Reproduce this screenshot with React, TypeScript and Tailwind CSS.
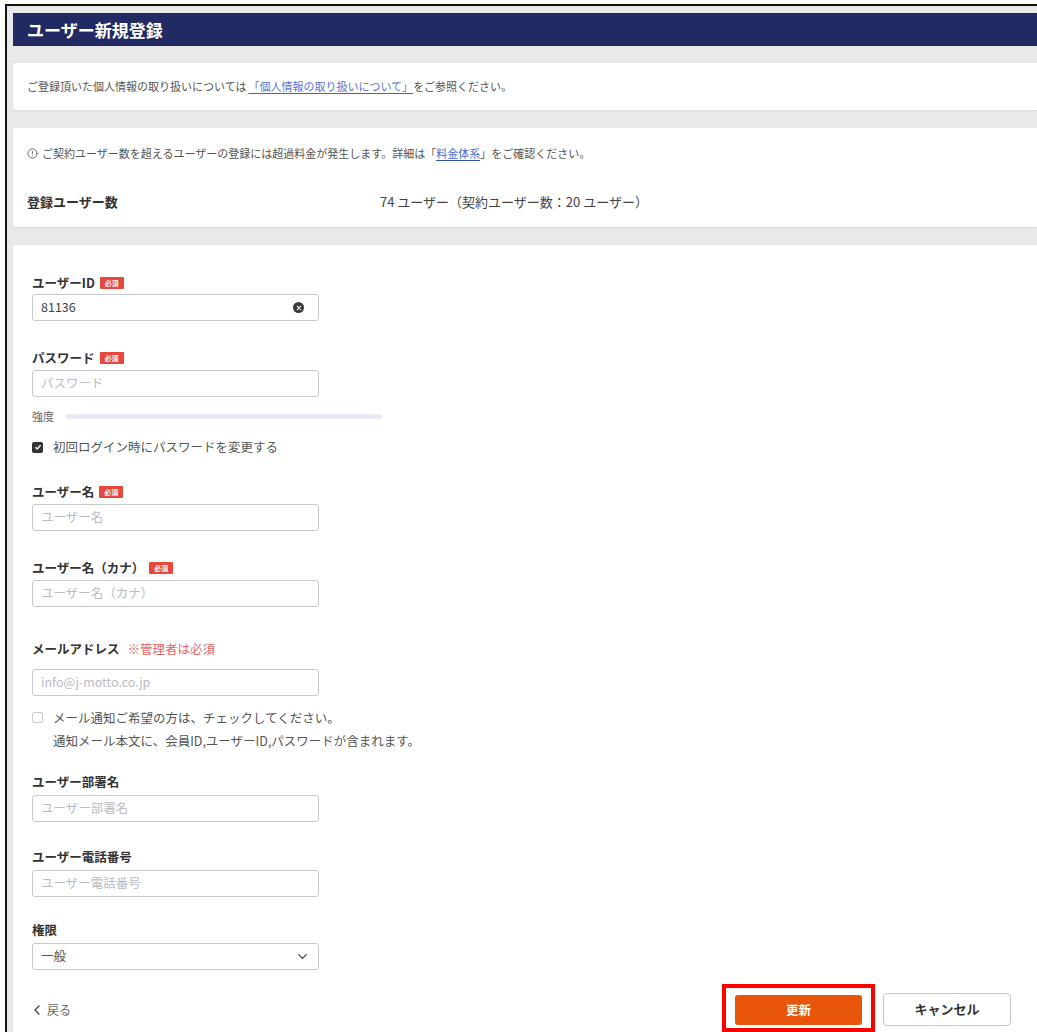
import { ChevronDown, ChevronLeft, CircleAlert } from 'lucide-react';

// 必須バッジ
function Required() {
  return (
    <span className="ml-[5px] inline-flex h-[12px] w-[24px] items-center justify-center rounded-[1px] bg-[#e8473b] text-[7px] leading-none text-white">
      必須
    </span>
  );
}

// 項目ラベル
function Label({ text, required, className = '' }: { text: string; required?: boolean; className?: string }) {
  return (
    <div className={`flex h-[18px] items-center text-[12.5px] font-bold text-[#333] ${className}`}>
      {text}
      {required && <Required />}
    </div>
  );
}

// テキスト入力
function TextInput({ placeholder, value, className = 'mt-[3px]', clearable }: { placeholder?: string; value?: string; className?: string; clearable?: boolean }) {
  return (
    <div className={`flex h-[27px] w-[287px] items-center rounded-[3px] border border-[#c9c9c9] bg-white pl-[8px] pr-[14px] text-[12.5px] ${className}`}>
      <span className={`flex-1 ${value ? 'text-[#444]' : 'text-[#b9bcc4]'}`}>{value ?? placeholder}</span>
      {clearable && (
        <span className="flex h-[11px] w-[11px] items-center justify-center rounded-full bg-[#3a3a3a]">
          <svg viewBox="0 0 10 10" className="h-[6px] w-[6px]" stroke="#fff" strokeWidth="1.8" strokeLinecap="round">
            <path d="M2 2l6 6M8 2l-6 6" />
          </svg>
        </span>
      )}
    </div>
  );
}

export default function App() {
  return (
    <div className="h-[1032px] w-[1037px] overflow-hidden bg-white pl-[5px] pt-[4px] font-['Noto_Sans_CJK_JP','Noto_Sans',sans-serif]">
      <div className="flex h-full flex-col border-l-2 border-t-2 border-[#111] bg-[#e9e9e9] pl-[6px] pt-[7px]">
        {/* タイトルバー */}
        <div className="flex h-[33px] shrink-0 items-center bg-[#212a62] pl-[14px] text-[17px] font-bold text-white">
          ユーザー新規登録
        </div>

        {/* 個人情報の案内 */}
        <div className="mt-[17px] flex h-[47px] shrink-0 items-center rounded-l-[3px] bg-white pl-[14px] text-[11px] text-[#555] shadow-[0_1px_2px_rgba(0,0,0,0.08)]">
          ご登録頂いた個人情報の取り扱いについては
          <span className="ml-[2px] text-[#5b73e0] underline decoration-[#3d6f8f] underline-offset-2">「個人情報の取り扱いについて」</span>
          をご参照ください。
        </div>

        {/* 契約ユーザー数 */}
        <div className="mt-[18px] flex h-[99px] shrink-0 flex-col rounded-l-[3px] bg-white pl-[14px] pt-[17px] shadow-[0_1px_2px_rgba(0,0,0,0.08)]">
          <div className="flex h-[16px] items-center text-[11px] text-[#555]">
            <CircleAlert className="mr-[4px] h-[11px] w-[11px]" strokeWidth={1.8} />
            ご契約ユーザー数を超えるユーザーの登録には超過料金が発生します。詳細は「
            <span className="text-[#3d6fd8] underline decoration-[#2c5aa0] underline-offset-2">料金体系</span>
            」をご確認ください。
          </div>
          <div className="mt-[32px] flex h-[18px] items-center text-[13px]">
            <span className="w-[353px] font-bold text-[#333]">登録ユーザー数</span>
            <span className="text-[#444]">74 ユーザー（契約ユーザー数：20 ユーザー）</span>
          </div>
        </div>

        {/* 入力フォーム */}
        <div className="mt-[18px] flex flex-1 flex-col rounded-tl-[3px] bg-white pl-[19px] pr-[26px] pt-[29px] shadow-[0_1px_2px_rgba(0,0,0,0.08)]">
          <Label text="ユーザーID" required />
          <TextInput value="81136" className="mt-[2px]" clearable />

          <Label text="パスワード" required className="mt-[28px]" />
          <TextInput placeholder="パスワード" />
          <div className="mt-[12px] flex h-[14px] items-center text-[11px] text-[#666]">
            <span className="w-[34px]">強度</span>
            <div className="h-[5px] w-[316px] rounded-full bg-[#e7eaf2]" />
          </div>
          <div className="mt-[15px] flex h-[18px] items-center text-[12.5px] text-[#555]">
            <span className="mr-[10px] flex h-[11px] w-[11px] items-center justify-center rounded-[2px] bg-[#333]">
              <svg viewBox="0 0 10 10" className="h-[8px] w-[8px]" fill="none" stroke="#fff" strokeWidth="1.8">
                <path d="M1.8 5.2l2.2 2.2 4.2-4.6" />
              </svg>
            </span>
            初回ログイン時にパスワードを変更する
          </div>

          <Label text="ユーザー名" required className="mt-[27px]" />
          <TextInput placeholder="ユーザー名" />

          <Label text="ユーザー名（カナ）" required className="mt-[28px]" />
          <TextInput placeholder="ユーザー名（カナ）" />

          <div className="mt-[33px] flex h-[18px] items-center text-[12.5px]">
            <span className="font-bold text-[#333]">メールアドレス</span>
            <span className="ml-[8px] text-[#e8686a]">※管理者は必須</span>
          </div>
          <TextInput placeholder="info@j-motto.co.jp" className="mt-[11px]" />
          <div className="mt-[10px] flex text-[12.5px] leading-[23px] text-[#555]">
            <span className="mr-[10px] mt-[6px] h-[11px] w-[11px] shrink-0 rounded-[2px] border border-[#ccc]" />
            <div>
              <div>メール通知ご希望の方は、チェックしてください。</div>
              <div>通知メール本文に、会員ID,ユーザーID,パスワードが含まれます。</div>
            </div>
          </div>

          <Label text="ユーザー部署名" className="mt-[21px]" />
          <TextInput placeholder="ユーザー部署名" className="mt-[4px]" />

          <Label text="ユーザー電話番号" className="mt-[26px]" />
          <TextInput placeholder="ユーザー電話番号" className="mt-[4px]" />

          <Label text="権限" className="mt-[24px]" />
          <div className="mt-[4px] flex h-[27px] w-[287px] items-center rounded-[3px] border border-[#c9c9c9] pl-[8px] pr-[8px] text-[12.5px] text-[#555]">
            <span className="flex-1">一般</span>
            <ChevronDown className="h-[15px] w-[15px] text-[#444]" strokeWidth={2} />
          </div>

          {/* フッター操作 */}
          <div className="mt-[14px] flex shrink-0 items-center">
            <div className="flex flex-1 items-center pt-[4px] text-[12px] text-[#666]">
              <ChevronLeft className="-ml-[3px] h-[16px] w-[16px] text-[#444]" strokeWidth={2} />
              <span className="ml-[2px]">戻る</span>
            </div>
            <div className="border-4 border-[#ff0000] px-[9px] pb-[3px] pt-[7px]">
              <button className="flex h-[30px] w-[127px] items-center justify-center rounded-[3px] bg-[#e8560b] text-[12.5px] font-bold text-white">
                更新
              </button>
            </div>
            <button className="ml-[8px] mt-[2px] flex h-[33px] w-[128px] items-center justify-center rounded-[4px] border border-[#c5c5c5] bg-white text-[13px] font-bold text-[#333]">
              キャンセル
            </button>
          </div>
        </div>
      </div>
    </div>
  );
}
